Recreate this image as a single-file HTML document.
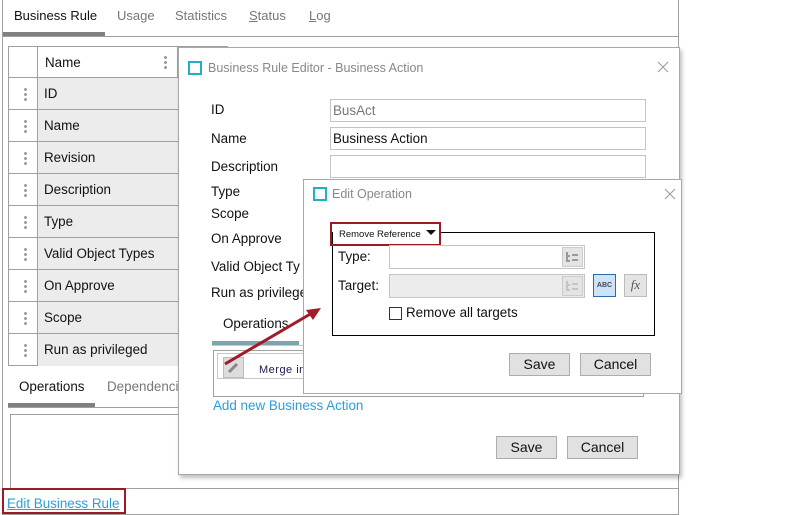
<!DOCTYPE html>
<html><head><meta charset="utf-8"><style>
*{box-sizing:border-box;margin:0;padding:0}
body{width:799px;height:515px;background:#fff;font-family:"Liberation Sans",sans-serif;font-size:13.4px;color:#111;position:relative;overflow:hidden}
.a{position:absolute}
.t{position:absolute;white-space:nowrap;line-height:16px}
.inp{position:absolute;border:1px solid #c4c4c4;background:#fff}
.btn{position:absolute;border:1px solid #adadad;background:#e1e1e1;text-align:center;line-height:21px;font-size:14px}
.dots{position:absolute;width:3px;height:14px;background:radial-gradient(circle,#999 1.3px,transparent 1.6px) 0 0/3px 5px repeat-y}
</style></head><body>
<div class="a" style="left:2px;top:0;width:677px;height:515px;border:1px solid #a0a0a0;border-top:none"></div>
<div class="t" style="left:14px;top:8px;font-size:13px">Business Rule</div>
<div class="t" style="left:117px;top:8px;color:#777;font-size:13px">Usage</div>
<div class="t" style="left:175px;top:8px;color:#777;font-size:13px">Statistics</div>
<div class="t" style="left:249px;top:8px;color:#777;font-size:13px"><u>S</u>tatus</div>
<div class="t" style="left:309px;top:8px;color:#777;font-size:13px"><u>L</u>og</div>
<div class="a" style="left:3px;top:32px;width:102px;height:4px;background:#808080"></div>
<div class="a" style="left:3px;top:36px;width:675px;height:1px;background:#a0a0a0"></div>
<div class="a" style="left:8px;top:46px;width:220px;height:320px;border:1px solid #a0a0a0"></div>
<div class="a" style="left:37px;top:46px;width:1px;height:320px;background:#a0a0a0"></div>
<div class="a" style="left:177px;top:46px;width:1px;height:32px;background:#a0a0a0"></div>
<div class="t" style="left:45px;top:55px">Name</div>
<div class="dots" style="left:164px;top:55px"></div>
<div class="a" style="left:38px;top:78px;width:190px;height:288px;background:#ececec"></div>
<div class="a" style="left:8px;top:77px;width:220px;height:1px;background:#a0a0a0"></div>
<div class="a" style="left:8px;top:109px;width:220px;height:1px;background:#a0a0a0"></div>
<div class="a" style="left:8px;top:141px;width:220px;height:1px;background:#a0a0a0"></div>
<div class="a" style="left:8px;top:173px;width:220px;height:1px;background:#a0a0a0"></div>
<div class="a" style="left:8px;top:205px;width:220px;height:1px;background:#a0a0a0"></div>
<div class="a" style="left:8px;top:237px;width:220px;height:1px;background:#a0a0a0"></div>
<div class="a" style="left:8px;top:269px;width:220px;height:1px;background:#a0a0a0"></div>
<div class="a" style="left:8px;top:301px;width:220px;height:1px;background:#a0a0a0"></div>
<div class="a" style="left:8px;top:333px;width:220px;height:1px;background:#a0a0a0"></div>
<div class="dots" style="left:24px;top:87px"></div><div class="t" style="left:44px;top:86px">ID</div>
<div class="dots" style="left:24px;top:119px"></div><div class="t" style="left:44px;top:118px">Name</div>
<div class="dots" style="left:24px;top:151px"></div><div class="t" style="left:44px;top:150px">Revision</div>
<div class="dots" style="left:24px;top:183px"></div><div class="t" style="left:44px;top:182px">Description</div>
<div class="dots" style="left:24px;top:215px"></div><div class="t" style="left:44px;top:214px">Type</div>
<div class="dots" style="left:24px;top:247px"></div><div class="t" style="left:44px;top:246px">Valid Object Types</div>
<div class="dots" style="left:24px;top:279px"></div><div class="t" style="left:44px;top:278px">On Approve</div>
<div class="dots" style="left:24px;top:311px"></div><div class="t" style="left:44px;top:310px">Scope</div>
<div class="dots" style="left:24px;top:343px"></div><div class="t" style="left:44px;top:342px">Run as privileged</div>
<div class="t" style="left:19px;top:379px">Operations</div>
<div class="t" style="left:107px;top:379px;color:#777">Dependencies</div>
<div class="a" style="left:8px;top:403px;width:87px;height:4px;background:#808080"></div>
<div class="a" style="left:8px;top:407px;width:670px;height:1px;background:#a0a0a0"></div>
<div class="a" style="left:10px;top:414px;width:668px;height:75px;border:1px solid #a0a0a0;border-bottom:none;border-right:none"></div>
<div class="a" style="left:3px;top:488px;width:675px;height:1px;background:#a0a0a0"></div>
<div class="t" style="left:7px;top:496px;color:#2a9fd8;text-decoration:underline">Edit Business Rule</div>
<div class="a" style="left:2px;top:488px;width:124px;height:26px;border:2px solid #9b1b24"></div>
<div class="a" style="left:178px;top:47px;width:502px;height:428px;background:#fff;border:1px solid #a8a8a8;box-shadow:2px 3px 4px rgba(0,0,0,.25)"></div>
<div class="a" style="left:188px;top:61px;width:14px;height:14px;border:2px solid #1fb0c4"></div>
<div class="t" style="left:208px;top:60px;font-size:12.5px;color:#888">Business Rule Editor - Business Action</div>
<svg class="a" style="left:657px;top:61px" width="12" height="12"><path d="M1 1L11 11M11 1L1 11" stroke="#999" stroke-width="1"/></svg>
<div class="t" style="left:211px;top:102px">ID</div>
<div class="t" style="left:211px;top:131px">Name</div>
<div class="t" style="left:211px;top:159px">Description</div>
<div class="t" style="left:211px;top:184px">Type</div>
<div class="t" style="left:211px;top:206px">Scope</div>
<div class="t" style="left:211px;top:231px">On Approve</div>
<div class="t" style="left:211px;top:259px">Valid Object Ty</div>
<div class="t" style="left:211px;top:285px">Run as privilege</div>
<div class="inp" style="left:330px;top:99px;width:316px;height:23px"></div><div class="t" style="left:333px;top:103px;color:#777">BusAct</div>
<div class="inp" style="left:330px;top:127px;width:316px;height:23px"></div><div class="t" style="left:333px;top:131px">Business Action</div>
<div class="inp" style="left:330px;top:155px;width:316px;height:23px"></div>
<div class="t" style="left:223px;top:316px">Operations</div>
<div class="a" style="left:212px;top:341px;width:87px;height:4px;background:#7fa3ac"></div>
<div class="a" style="left:212px;top:345px;width:460px;height:1px;background:#c8c8c8"></div>
<div class="a" style="left:213px;top:350px;width:431px;height:47px;border:1px solid #a0a0a0"></div>
<div class="a" style="left:217px;top:353px;width:200px;height:26px;border:1px solid #c8c8c8"></div>
<div class="a" style="left:223px;top:357px;width:21px;height:21px;background:#ddd;border:1px solid #bbb"></div>
<svg class="a" style="left:226px;top:360px" width="15" height="15"><path d="M3 12 L11 4" stroke="#888" stroke-width="3"/></svg>
<div class="t" style="left:259px;top:362px;font-size:11px;color:#1a1a50;letter-spacing:.5px">Merge in</div>
<div class="t" style="left:213px;top:398px;color:#2a9fd8">Add new Business Action</div>
<div class="btn" style="left:496px;top:436px;width:61px;height:23px">Save</div>
<div class="btn" style="left:567px;top:436px;width:71px;height:23px">Cancel</div>
<div class="a" style="left:303px;top:179px;width:379px;height:215px;background:#fff;border:1px solid #a8a8a8"></div>
<div class="a" style="left:313px;top:187px;width:14px;height:14px;border:2px solid #1fb0c4"></div>
<div class="t" style="left:332px;top:186px;font-size:12.5px;color:#888">Edit Operation</div>
<svg class="a" style="left:664px;top:188px" width="12" height="12"><path d="M1 1L11 11M11 1L1 11" stroke="#999" stroke-width="1"/></svg>
<div class="a" style="left:332px;top:232px;width:323px;height:104px;border:1px solid #000"></div>
<div class="a" style="left:333px;top:224px;width:106px;height:20px;background:#fff"></div>
<div class="t" style="left:339px;top:227px;font-size:9.5px">Remove Reference</div>
<svg class="a" style="left:426px;top:230px" width="10" height="6"><path d="M0 0 L10 0 L5 5Z" fill="#111"/></svg>
<div class="a" style="left:330px;top:222px;width:111px;height:24px;border:2px solid #9b1b24"></div>
<div class="t" style="left:338px;top:249px">Type:</div>
<div class="t" style="left:338px;top:278px">Target:</div>
<div class="inp" style="left:389px;top:245px;width:196px;height:24px"></div>
<div class="a" style="left:562px;top:247px;width:21px;height:20px;background:#e4e4e4;border:1px solid #ccc"></div>
<svg class="a" style="left:566px;top:251px" width="13" height="12"><path d="M1 1V10H4M1 5H4M6 4H12M6 9H12" stroke="#999" stroke-width="2" fill="none"/></svg>
<div class="inp" style="left:389px;top:274px;width:196px;height:24px;background:#ececec"></div>
<div class="a" style="left:562px;top:276px;width:21px;height:20px;background:#e4e4e4;border:1px solid #ccc"></div>
<svg class="a" style="left:566px;top:280px" width="13" height="12"><path d="M1 1V10H4M1 5H4M6 4H12M6 9H12" stroke="#c4c4c4" stroke-width="2" fill="none"/></svg>
<div class="a" style="left:593px;top:274px;width:23px;height:23px;background:#cde4f7;border:1px solid #2b6ca8;font-size:7px;font-weight:bold;line-height:21px;text-align:center;color:#445">ABC</div>
<div class="a" style="left:624px;top:274px;width:23px;height:23px;background:#e4e4e4;border:1px solid #bbb;font-family:'Liberation Serif',serif;font-style:italic;font-size:13px;line-height:20px;text-align:center;color:#555">fx</div>
<div class="a" style="left:389px;top:307px;width:13px;height:13px;border:1px solid #333"></div>
<div class="t" style="left:406px;top:305px">Remove all targets</div>
<div class="btn" style="left:509px;top:353px;width:61px;height:23px">Save</div>
<div class="btn" style="left:580px;top:353px;width:71px;height:23px">Cancel</div>
<svg class="a" style="left:0;top:0" width="799" height="515"><path d="M225 364 L312 313" stroke="#a01c28" stroke-width="3"/><path d="M321 308 L306 310 L313 320Z" fill="#a01c28"/></svg>
</body></html>
